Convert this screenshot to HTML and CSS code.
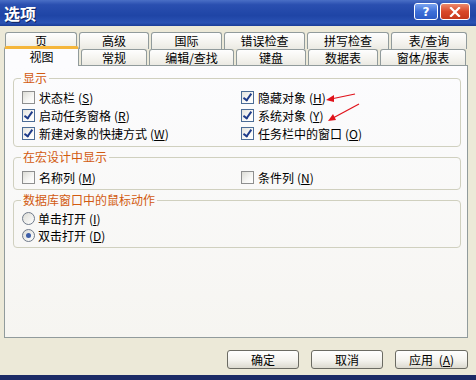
FILE: index.html
```html
<!DOCTYPE html>
<html lang="zh-CN">
<head>
    <meta charset="UTF-8">
    <title>选项</title>
    <link rel="stylesheet" href="styles.css">
</head>
<body>
    <div class="window">
        <div class="titlebar">
            <span class="title">选项</span>
            <div class="caption-btns">
                <span class="cap help">?</span>
                <span class="cap close">
                    <svg width="12" height="10" viewBox="0 0 12 10"><path d="M2 1 L10 9 M10 1 L2 9" stroke="#fff" stroke-width="2.2" stroke-linecap="square"/></svg>
                </span>
            </div>
        </div>

        <div class="dialog">
            <div class="tabs">
                <div class="tab-row back">
                    <div class="tab w72">页</div>
                    <div class="tab w70">高级</div>
                    <div class="tab w71">国际</div>
                    <div class="tab w81">错误检查</div>
                    <div class="tab w82">拼写检查</div>
                    <div class="tab w76">表/查询</div>
                </div>
                <div class="tab-row front">
                    <div class="tab active w75">视图</div>
                    <div class="tab w66">常规</div>
                    <div class="tab w85">编辑/查找</div>
                    <div class="tab w70">键盘</div>
                    <div class="tab w70">数据表</div>
                    <div class="tab w86">窗体/报表</div>
                </div>
            </div>

            <div class="panel">
                <fieldset class="group g-show">
                    <legend>显示</legend>
                    <div class="opts">
                        <label class="opt"><span class="box"></span>状态栏 <span class="key">(<u>S</u>)</span></label>
                        <label class="opt"><span class="box on"></span>隐藏对象 <span class="key">(<u>H</u>)</span></label>
                        <label class="opt"><span class="box on"></span>启动任务窗格 <span class="key">(<u>R</u>)</span></label>
                        <label class="opt"><span class="box on"></span>系统对象 <span class="key">(<u>Y</u>)</span></label>
                        <label class="opt"><span class="box on"></span>新建对象的快捷方式 <span class="key">(<u>W</u>)</span></label>
                        <label class="opt"><span class="box on"></span>任务栏中的窗口 <span class="key">(<u>O</u>)</span></label>
                    </div>
                </fieldset>

                <fieldset class="group g-macro">
                    <legend>在宏设计中显示</legend>
                    <div class="opts">
                        <label class="opt"><span class="box"></span>名称列 <span class="key">(<u>M</u>)</span></label>
                        <label class="opt"><span class="box"></span>条件列 <span class="key">(<u>N</u>)</span></label>
                    </div>
                </fieldset>

                <fieldset class="group g-mouse">
                    <legend>数据库窗口中的鼠标动作</legend>
                    <label class="opt"><span class="radio"></span>单击打开 <span class="key">(<u>I</u>)</span></label>
                    <label class="opt"><span class="radio on"></span>双击打开 <span class="key">(<u>D</u>)</span></label>
                </fieldset>

                <svg class="arrows" width="50" height="40" viewBox="0 0 50 40">
                    <path d="M30 4 L6 9" stroke="#e0121a" stroke-width="1.2"/>
                    <path d="M1 10 L9 5 L9 12 Z" fill="#e0121a"/>
                    <path d="M34 14 L8 28" stroke="#e0121a" stroke-width="1.2"/>
                    <path d="M3 31 L8 24 L11 30 Z" fill="#e0121a"/>
                </svg>
            </div>

            <div class="buttons">
                <button class="btn">确定</button>
                <button class="btn">取消</button>
                <button class="btn">应用 <span class="key">(<u>A</u>)</span></button>
            </div>
        </div>
    </div>
</body>
</html>
```

FILE: styles.css
```css
body {
    margin: 0;
    font-family: "Noto Sans CJK SC", "DejaVu Sans", sans-serif;
    font-size: 12px;
    color: #000;
}

.window {
    width: 476px;
    height: 380px;
    display: flex;
    flex-direction: column;
    background: #ece9d8;
    border-bottom: 5px solid #1c2b66;
    box-sizing: border-box;
}

.titlebar {
    height: 26px;
    flex: none;
    display: flex;
    align-items: center;
    justify-content: space-between;
    background: linear-gradient(180deg, #4a6fc6 0%, #2a4fb0 18%, #1f45a6 60%, #2a52b4 88%, #193c96 100%);
}

.title {
    color: #fff;
    font-weight: bold;
    font-size: 16px;
    padding-left: 4px;
    text-shadow: 1px 1px 0 #0b1f5c;
}

.caption-btns {
    display: flex;
    gap: 2px;
    padding-right: 6px;
    align-self: flex-start;
    margin-top: 3px;
}

.cap {
    height: 15px;
    border: 1px solid #fff;
    border-radius: 3px;
    display: flex;
    align-items: center;
    justify-content: center;
    color: #fff;
    font-weight: bold;
    font-family: "DejaVu Sans", sans-serif;
    font-size: 12px;
}

.help {
    width: 22px;
    background: linear-gradient(180deg, #7aa3f0 0%, #3d6fd8 50%, #2c5cc8 100%);
}

.close {
    width: 28px;
    background: linear-gradient(180deg, #ec8a6c 0%, #d9482a 50%, #c6371b 100%);
}

.dialog {
    flex: 1;
    display: flex;
    flex-direction: column;
    padding-top: 6px;
}

/* tabs */
.tab-row {
    display: flex;
    gap: 2px;
    position: relative;
}

.tab-row.back {
    height: 17px;
    padding-left: 5px;
}

.tab-row.front {
    height: 16px;
    padding-left: 4px;
    align-items: flex-end;
    z-index: 1;
}

.tab {
    box-sizing: border-box;
    height: 17px;
    border: 1px solid #919b9c;
    border-bottom: none;
    border-radius: 3px 3px 0 0;
    background: linear-gradient(180deg, #fefefe 0%, #f4f3ee 60%, #ebeae3 100%);
    text-align: center;
    line-height: 16px;
    flex: none;
}

.tab-row.front .tab {
    height: 16px;
    line-height: 16px;
}

.tab-row.front .tab.active {
    height: 20px;
    margin-bottom: -1px;
    background: #fcfcfe;
    border-top: 3px solid #f5b63a;
    line-height: 15px;
    padding-bottom: 2px;
}

.w66 { width: 66px; }
.w70 { width: 70px; }
.w71 { width: 71px; }
.w72 { width: 72px; }
.w75 { width: 75px; }
.w76 { width: 76px; }
.w81 { width: 81px; }
.w82 { width: 82px; }
.w85 { width: 85px; }
.w86 { width: 86px; }

/* panel */
.panel {
    position: relative;
    height: 273px;
    width: 464px;
    margin-left: 4px;
    box-sizing: border-box;
    border: 1px solid #919b9c;
    background: linear-gradient(180deg, #fcfcfe 0%, #f6f5f1 100%);
    padding: 5px 6px 0 8px;
}

.group {
    margin: 0;
    border: 1px solid #d0d0bf;
    border-radius: 4px;
    padding: 3px 8px 4px 8px;
    min-width: 0;
}

.group legend {
    color: #d25a10;
    padding: 0 2px;
    margin-left: -1px;
    line-height: 14px;
}

.g-macro,
.g-mouse {
    margin-top: 3px;
}

.g-macro {
    padding-top: 4px;
    padding-bottom: 3px;
}

.g-mouse {
    padding-top: 3px;
    padding-bottom: 3px;
}

.opts {
    display: grid;
    grid-template-columns: 219px 1fr;
}

.opt {
    display: flex;
    align-items: center;
    height: 18px;
    white-space: nowrap;
}

.g-mouse .opt {
    height: 17px;
}

.key {
    margin-left: 3px;
}

.box {
    width: 11px;
    height: 11px;
    border: 1px solid #8e8f8f;
    background: linear-gradient(135deg, #dcdcd6 0%, #f7f7f5 60%, #fff 100%);
    margin-right: 4px;
    flex: none;
    position: relative;
}

.box.on {
    border-color: #4b6c96;
    background: linear-gradient(135deg, #e4e4de 0%, #fafaf8 60%, #fff 100%);
}

.box.on::after {
    content: "";
    position: absolute;
    left: 3px;
    top: 0;
    width: 3px;
    height: 7px;
    border: solid #1f3c8a;
    border-width: 0 2px 2px 0;
    transform: rotate(35deg);
}

.radio {
    width: 11px;
    height: 11px;
    border: 1px solid #6f7a8a;
    border-radius: 50%;
    background: linear-gradient(135deg, #dcdcd6 0%, #fff 100%);
    margin-right: 3px;
    flex: none;
    position: relative;
}

.radio.on::after {
    content: "";
    position: absolute;
    left: 3px;
    top: 3px;
    width: 5px;
    height: 5px;
    border-radius: 50%;
    background: #3d5ea8;
}

.arrows {
    position: absolute;
    left: 320px;
    top: 24px;
}

/* buttons */
.buttons {
    display: flex;
    justify-content: flex-end;
    gap: 12px;
    padding: 12px 8px 0 0;
}

.btn {
    width: 72px;
    height: 19px;
    padding: 0;
    border: 1px solid #6b6b63;
    border-radius: 3px;
    background: linear-gradient(180deg, #ffffff 0%, #f4f3ee 55%, #dcdad0 100%);
    font-family: inherit;
    font-size: 12px;
    line-height: 16px;
    color: #000;
}

.btn:last-child {
    width: 73px;
}
```
